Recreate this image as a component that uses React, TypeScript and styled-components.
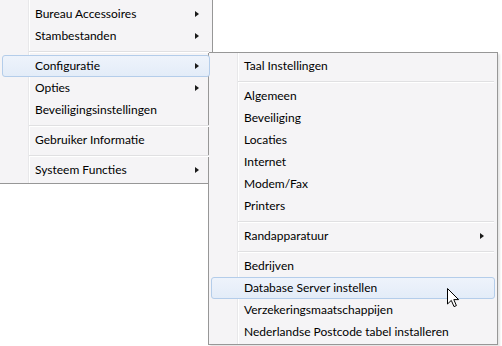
import React from 'react';
import styled, { createGlobalStyle } from 'styled-components';

type Entry =
  | { kind: 'item'; label: string; sub?: boolean; hot?: boolean }
  | { kind: 'sep' };

const mainMenu: Entry[] = [
  { kind: 'item', label: 'Bureau Accessoires', sub: true },
  { kind: 'item', label: 'Stambestanden', sub: true },
  { kind: 'sep' },
  { kind: 'item', label: 'Configuratie', sub: true, hot: true },
  { kind: 'item', label: 'Opties', sub: true },
  { kind: 'item', label: 'Beveiligingsinstellingen' },
  { kind: 'sep' },
  { kind: 'item', label: 'Gebruiker Informatie' },
  { kind: 'sep' },
  { kind: 'item', label: 'Systeem Functies', sub: true },
];

const configMenu: Entry[] = [
  { kind: 'item', label: 'Taal Instellingen' },
  { kind: 'sep' },
  { kind: 'item', label: 'Algemeen' },
  { kind: 'item', label: 'Beveiliging' },
  { kind: 'item', label: 'Locaties' },
  { kind: 'item', label: 'Internet' },
  { kind: 'item', label: 'Modem/Fax' },
  { kind: 'item', label: 'Printers' },
  { kind: 'sep' },
  { kind: 'item', label: 'Randapparatuur', sub: true },
  { kind: 'sep' },
  { kind: 'item', label: 'Bedrijven' },
  { kind: 'item', label: 'Database Server instellen', hot: true },
  { kind: 'item', label: 'Verzekeringsmaatschappijen' },
  { kind: 'item', label: 'Nederlandse Postcode tabel installeren' },
];

function MenuList({ entries }: { entries: Entry[] }) {
  return (
    <>
      {entries.map((e, i) =>
        e.kind === 'sep' ? (
          <Separator key={i} />
        ) : (
          <Item key={i} $hot={e.hot}>
            <Label>{e.label}</Label>
            {e.sub && <Arrow />}
          </Item>
        )
      )}
    </>
  );
}

export default function App() {
  return (
    <>
      <GlobalStyle />
      <Desktop>
        <Menu $left={-1} $top={-1} $width={214} $padTop={3} $padBottom={2}>
          <MenuList entries={mainMenu} />
        </Menu>
        <Menu $left={208} $top={52} $width={290} $padTop={2} $padBottom={1} $shadow>
          <MenuList entries={configMenu} />
        </Menu>
        <Cursor width="13" height="20" viewBox="0 0 13 20">
          <path
            d="M0.5 0.5 L0.5 16 L4.3 12.4 L7 18.6 L9.4 17.6 L6.8 11.6 L11.6 11.6 Z"
            fill="#fff"
            stroke="#000"
            strokeWidth="1"
            strokeLinejoin="miter"
          />
        </Cursor>
      </Desktop>
    </>
  );
}

const GlobalStyle = createGlobalStyle`
  body {
    margin: 0;
    background: #ffffff;
    font-family: Lato, "Noto Sans", sans-serif;
  }
`;

const Desktop = styled.div`
  position: relative;
  width: 502px;
  height: 346px;
  overflow: hidden;
  background: #ffffff;
`;

const Menu = styled.div<{
  $left: number;
  $top: number;
  $width: number;
  $padTop: number;
  $padBottom: number;
  $shadow?: boolean;
}>`
  position: absolute;
  left: ${p => p.$left}px;
  top: ${p => p.$top}px;
  width: ${p => p.$width}px;
  box-sizing: border-box;
  display: flex;
  flex-direction: column;
  padding: ${p => p.$padTop}px 2px ${p => p.$padBottom}px 2px;
  background: #f5f4f6;
  border: 1px solid #979797;
  box-shadow: ${p => (p.$shadow ? '2px 2px 2px rgba(0, 0, 0, 0.1)' : 'none')};

  &::before {
    content: '';
    position: absolute;
    top: 0;
    bottom: 0;
    left: 28px;
    width: 1px;
    background: #e8e8ea;
    box-shadow: 1px 0 0 #ffffff;
  }
`;

const Item = styled.div<{ $hot?: boolean }>`
  position: relative;
  z-index: 1;
  height: 22px;
  box-sizing: border-box;
  display: flex;
  align-items: center;
  padding: 0 10px 0 32px;
  border: 1px solid ${p => (p.$hot ? '#b4cdea' : 'transparent')};
  border-radius: 3px;
  background: ${p =>
    p.$hot ? 'linear-gradient(to bottom, #eef3fb 0%, #e3ecf8 100%)' : 'transparent'};
`;

const Label = styled.span`
  flex: 1;
  font-size: 12px;
  color: #000000;
  white-space: nowrap;
  line-height: 20px;
`;

const Arrow = styled.span`
  width: 0;
  height: 0;
  border-top: 3.5px solid transparent;
  border-bottom: 3.5px solid transparent;
  border-left: 4px solid #1a1a1a;
`;

const Separator = styled.div`
  position: relative;
  z-index: 1;
  height: 8px;
  margin: 0 1px 0 27px;
  display: flex;
  flex-direction: column;
  justify-content: center;

  &::before {
    content: '';
    height: 1px;
    background: #e0e0e2;
    box-shadow: 0 1px 0 #ffffff;
  }
`;

const Cursor = styled.svg`
  position: absolute;
  left: 447px;
  top: 288px;
  z-index: 5;
`;
